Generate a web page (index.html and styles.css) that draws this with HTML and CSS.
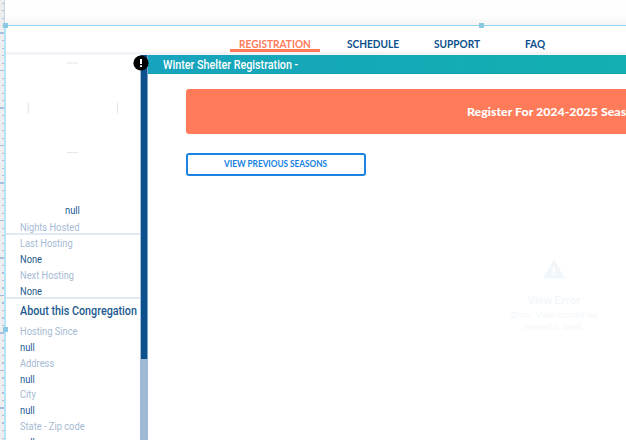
FILE: index.html
```html
<!DOCTYPE html>
<html lang="en">
<head>
<meta charset="utf-8">
<title>Winter Shelter Registration</title>
<link rel="stylesheet" href="styles.css">
</head>
<body>
<div class="editor">
  <div class="ruler"></div>
  <div class="workspace">
    <div class="backdrop"></div>
    <div class="canvas">
      <i class="handle corner"></i><i class="handle top"></i><i class="handle left"></i>
      <nav class="nav">
        <a class="tab active"><span>REGISTRATION</span></a>
        <a class="tab schedule"><span>SCHEDULE</span></a>
        <a class="tab support"><span>SUPPORT</span></a>
        <a class="tab faq"><span>FAQ</span></a>
      </nav>
      <div class="body">
        <aside class="sidebar">
          <div class="avatar">
            <svg width="92" height="92" viewBox="0 0 92 92"><path d="M40 1H51M40 90.6H51" stroke="#e3e3e3" stroke-width=".9"/><path d="M1.2 41V51M90.5 41V51" stroke="#dedede" stroke-width=".9"/></svg>
          </div>
          <div class="name"><span>null</span></div>
          <div class="group">
            <div class="label nights"><span>Nights Hosted</span></div>
          </div>
          <div class="group second">
            <div class="label"><span>Last Hosting</span></div>
            <div class="value"><span>None</span></div>
            <div class="label"><span>Next Hosting</span></div>
            <div class="value"><span>None</span></div>
          </div>
          <h2><span>About this Congregation</span></h2>
          <div class="label"><span>Hosting Since</span></div>
          <div class="value"><span>null</span></div>
          <div class="label"><span>Address</span></div>
          <div class="value"><span>null</span></div>
          <div class="label"><span>City</span></div>
          <div class="value"><span>null</span></div>
          <div class="label"><span>State - Zip code</span></div>
          <div class="value"><span>null</span></div>
        </aside>
        <div class="scrollbar">
          <div class="thumb"></div>
          <svg class="alert" width="16" height="16" viewBox="0 0 16 16"><circle cx="8" cy="8" r="7.6" fill="#000"/><path d="M8 4V9" stroke="#fff" stroke-width="2"/><path d="M8 10.3V12" stroke="#fff" stroke-width="2"/></svg>
        </div>
        <main class="main">
          <h1><span>Winter Shelter Registration -</span></h1>
          <div class="content">
            <div class="register"><span>Register For 2024-2025 Seas</span></div>
            <button class="previous"><span>VIEW PREVIOUS SEASONS</span></button>
            <div class="error">
              <svg width="22" height="20" viewBox="0 0 22 20"><path d="M11 0L22 19.2H0Z" fill="#f1f6fa"/><path d="M11 7.5V13M11 14.5V16.5" stroke="#fff" stroke-width="2.4"/></svg>
              <strong>View Error</strong>
              <p>Error: View cannot be<br>nested in itself.</p>
            </div>
          </div>
        </main>
      </div>
    </div>
  </div>
</div>
</body>
</html>
```
FILE: styles.css
```css
* { box-sizing: border-box; }
body { margin: 0; width: 626px; height: 440px; overflow: hidden; background: #fff; font-family: Roboto, "Liberation Sans", sans-serif; }
span { display: inline-block; white-space: nowrap; transform-origin: left center; }
.editor { display: flex; width: 626px; height: 440px; overflow: hidden; }
.ruler {
  flex: none; width: 4px; height: 440px;
  background:
    repeating-linear-gradient(#a6bfdb 0 1px, transparent 1px 37.5px) 0 -5px / 4px 450px no-repeat,
    repeating-linear-gradient(#a6bfdb 0 1px, transparent 1px 7.5px) 2px -5px / 2px 450px no-repeat,
    #eee;
}
.workspace { flex: none; width: 622px; }
.backdrop { height: 25px; border-left: 1px solid #cdd3e4; background: linear-gradient(#fefefe 60%, #f4f4f4); }
.canvas { position: relative; height: 415px; border-top: 1px solid #8fd5f1; border-left: 2px solid #b3e4f7; background: #fff; }
.handle { position: absolute; width: 5px; height: 5px; background: #8bc9e2; }
.corner { left: -3px; top: -3px; }
.top { left: 473px; top: -3px; }
.left { left: -3px; top: 301px; }
.nav { display: flex; height: 29px; padding-left: 224px; border-bottom: 3px solid #f3f4f8; font: bold 10.5px/12px Lato, sans-serif; color: #0b4f8c; }
.nav span { transform: scaleX(.962); }
.tab { display: block; height: 26px; padding-top: 12px; }
.active { width: 90px; padding-left: 9px; color: #ff7a59; border-bottom: 3px solid #ff7a59; }
.schedule { width: 87px; margin-left: 27px; }
.support { width: 91px; }
.body { display: flex; height: 385px; }
.sidebar { flex: none; width: 134px; height: 385px; overflow: hidden; color: #1c5990; font-size: 11.5px; }
.avatar { height: 147px; padding: 7px 0 0 21px; }
.avatar svg { display: block; }
.name { height: 17px; line-height: 17px; padding-left: 59px; }
.group { height: 16px; border-bottom: 2px solid #dfeaf5; }
.second { height: 64px; }
.label, .value { height: 15.85px; line-height: 16px; padding-left: 14px; }
.label { color: #a5bad3; }
.nights { height: 13px; line-height: 17px; }
.label span { transform: scaleX(.81); }
.value span, .name span { transform: scaleX(.81); }
h2 { margin: 0; height: 24px; padding-left: 14px; font: 500 12.5px/24px Roboto, sans-serif; }
h2 span { transform: scaleX(.86); }
.scrollbar { position: relative; flex: none; width: 8px; height: 385px; background: #9fb8d3; }
.thumb { height: 304px; background: #0b4f8c; border-left: 1px solid #9fc0dc; border-right: 1px solid #7aa3c8; }
.alert { position: absolute; left: -7.5px; top: -.5px; }
.main { flex: none; width: 478px; }
h1 { margin: 0; height: 19px; padding-left: 15px; background: linear-gradient(90deg, #17a3bd, #12b0b0); border-bottom: 1px solid #12a1ae; color: #fff; font: 500 12px/20px Roboto, sans-serif; }
h1 span { transform: scaleX(.895); }
.content { padding: 15px 0 0 38px; }
.register { height: 45px; padding-left: 281px; border-radius: 3px 0 0 3px; background: #ff7b59; color: #fff; font: 900 12px/45px Lato, sans-serif; overflow: hidden; }
.register span { transform: scaleX(1.03); }
.previous { display: block; width: 180px; height: 23px; margin: 19px 0 0 -.5px; padding: 0 0 0 36.5px; text-align: left; border: 2px solid #1b83e2; border-radius: 3px; background: #fff; color: #1580df; font: bold 9px/17px Lato, sans-serif; }
.previous span { transform: scaleX(.915) translateY(-1px); }
.error { width: 130px; margin: 83px 0 0 303px; display: flex; flex-direction: column; align-items: center; color: #f3f7fa; font: 9px/12px "Liberation Sans", sans-serif; text-align: center; }
.error strong { margin-top: 15px; font-size: 10.5px; line-height: 12px; }
.error p { margin: 3px 0 0; }
```
